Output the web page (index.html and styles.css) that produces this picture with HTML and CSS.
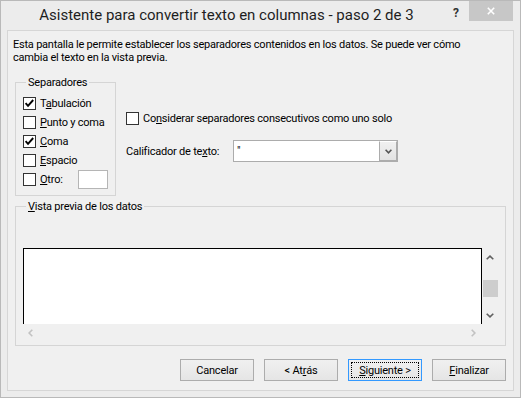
FILE: index.html
```html
<!DOCTYPE html>
<html lang="es">
<head>
<meta charset="utf-8">
<title>Asistente para convertir texto en columnas - paso 2 de 3</title>
<link rel="stylesheet" href="styles.css">
</head>
<body>
<div class="window">
  <div class="titlebar">
    <div class="title">Asistente para convertir texto en columnas - paso 2 de 3</div>
    <div class="help">?</div>
    <div class="close">
      <svg width="8" height="8" viewBox="0 0 8 8"><path d="M0.8 0.8 L7.2 7.2 M7.2 0.8 L0.8 7.2" stroke="#fff" stroke-width="1.6" fill="none"/></svg>
    </div>
  </div>
  <div class="client">
    <p class="intro">Esta pantalla le permite establecer los separadores contenidos en los datos. Se puede ver cómo<br>cambia el texto en la vista previa.</p>

    <div class="top-row">
      <div class="group sep">
        <div class="legend">Separadores</div>
        <div class="check-row">
          <span class="cb"><svg width="13" height="13" viewBox="0 0 13 13"><path d="M2.6 6.2 L5 8.8 L10.2 3" stroke="#000" stroke-width="1.9" fill="none"/></svg></span>
          <span>T<u>a</u>bulación</span>
        </div>
        <div class="check-row">
          <span class="cb"></span>
          <span><u>P</u>unto y coma</span>
        </div>
        <div class="check-row">
          <span class="cb"><svg width="13" height="13" viewBox="0 0 13 13"><path d="M2.6 6.2 L5 8.8 L10.2 3" stroke="#000" stroke-width="1.9" fill="none"/></svg></span>
          <span><u>C</u>oma</span>
        </div>
        <div class="check-row">
          <span class="cb"></span>
          <span><u>E</u>spacio</span>
        </div>
        <div class="check-row">
          <span class="cb"></span>
          <span><u>O</u>tro:</span>
          <span class="other-input"></span>
        </div>
      </div>

      <div class="options">
        <div class="check-row">
          <span class="cb"></span>
          <span>Co<u>n</u>siderar separadores consecutivos como uno solo</span>
        </div>
        <div class="qual-row">
          <span class="qual-label">Calificador de te<u>x</u>to:</span>
          <div class="combo">
            <span class="combo-value">"</span>
            <span class="combo-btn"><svg width="7" height="5" viewBox="0 0 7 5"><path d="M0.6 0.8 L3.5 3.8 L6.4 0.8" stroke="#555" stroke-width="1.6" fill="none"/></svg></span>
          </div>
        </div>
      </div>
    </div>

    <div class="group preview">
      <div class="legend"><u>V</u>ista previa de los datos</div>
      <div class="pv">
        <div class="pv-area"></div>
        <div class="vscroll">
          <svg class="arrow-up" width="8" height="5" viewBox="0 0 8 5"><path d="M0.7 4.3 L4 1.1 L7.3 4.3" stroke="#606060" stroke-width="1.6" fill="none"/></svg>
          <span class="thumb"></span>
          <svg class="arrow-down" width="8" height="5" viewBox="0 0 8 5"><path d="M0.7 0.7 L4 3.9 L7.3 0.7" stroke="#606060" stroke-width="1.6" fill="none"/></svg>
        </div>
        <div class="hscroll">
          <svg width="5" height="8" viewBox="0 0 5 8"><path d="M4.3 0.7 L1.1 4 L4.3 7.3" stroke="#c2c2c2" stroke-width="1.6" fill="none"/></svg>
          <svg width="5" height="8" viewBox="0 0 5 8"><path d="M0.7 0.7 L3.9 4 L0.7 7.3" stroke="#c2c2c2" stroke-width="1.6" fill="none"/></svg>
        </div>
      </div>
    </div>

    <div class="buttons">
      <button class="btn">Cancelar</button>
      <button class="btn">&lt; At<u>r</u>ás</button>
      <button class="btn default"><span class="focus"><u>S</u>iguiente &gt;</span></button>
      <button class="btn"><u>F</u>inalizar</button>
    </div>
  </div>
</div>
</body>
</html>
```
FILE: styles.css
```css
* { box-sizing: border-box; }
html, body { margin: 0; padding: 0; }
body {
  width: 521px;
  height: 398px;
  font-family: Roboto, "Liberation Sans", Arial, sans-serif;
  font-size: 11px;
  letter-spacing: -0.22px;
  color: #000;
  background: #fff;
}
u { text-decoration: underline; text-underline-offset: 1px; }

.window {
  width: 521px;
  height: 398px;
  background: #ececec;
  border: 1px solid #b9b9b9;
  padding: 0 6px 6px 6px;
  display: flex;
  flex-direction: column;
}

.titlebar {
  height: 29px;
  display: flex;
  align-items: flex-start;
}
.title {
  flex: 1;
  text-align: center;
  font-size: 15px;
  letter-spacing: 0;
  line-height: 29px;
  color: #1e1e1e;
  padding-left: 3px;
}
.help {
  width: 26px;
  text-align: center;
  font-weight: bold;
  font-size: 12px;
  letter-spacing: 0;
  line-height: 25px;
  color: #333;
}
.close {
  width: 44px;
  height: 20px;
  background: #c7c7c7;
  display: flex;
  align-items: center;
  justify-content: center;
  margin-right: 1px;
}

.client {
  flex: 1;
  background: #f0f0f0;
  border: 1px solid #d6d6d6;
  display: flex;
  flex-direction: column;
}

.intro {
  margin: 7px 0 0 5px;
  line-height: 13px;
  white-space: nowrap;
}

.top-row {
  display: flex;
  align-items: flex-start;
  margin-top: 18px;
}

.group {
  border: 1px solid #d5d5d5;
}
.legend {
  width: max-content;
  margin: -7px 0 0 3px;
  padding: 0 2px;
  background: #f0f0f0;
  line-height: 13px;
}

.sep {
  width: 101px;
  margin-left: 7px;
  padding: 5px 7px 6px 7px;
}
.sep .legend { margin-bottom: 5px; margin-top: -12px; }

.check-row {
  display: flex;
  align-items: center;
  height: 19px;
  gap: 4px;
  white-space: nowrap;
}
.cb {
  width: 13px;
  height: 13px;
  flex: none;
  border: 1px solid #333;
  background: #fff;
}
.cb svg { display: block; margin: -1px 0 0 -1px; }

.other-input {
  margin-left: auto;
  width: 30px;
  height: 19px;
  background: #fff;
  border: 1px solid #b5b5b5;
}

.options {
  margin: 27px 0 0 10px;
}
.qual-row {
  display: flex;
  align-items: center;
  margin-top: 12px;
}
.qual-label { width: 107px; white-space: nowrap; }
.combo {
  width: 165px;
  height: 22px;
  background: #fff;
  border: 1px solid #acacac;
  display: flex;
}
.combo-value {
  flex: 1;
  padding-left: 3px;
  line-height: 19px;
}
.combo-btn {
  width: 18px;
  border-left: 1px solid #acacac;
  border-top: 1px solid #fff;
  border-right: 1px solid #acacac;
  border-bottom: 1px solid #acacac;
  background: linear-gradient(#f0f0f0, #e3e3e3);
  display: flex;
  align-items: center;
  justify-content: center;
}

.preview {
  margin: 10px 7px 0 7px;
  padding: 0 0 4px 7px;
}
.preview .legend { margin-bottom: 35px; }

.pv {
  display: grid;
  grid-template-columns: 459px 16px;
  grid-template-rows: 76px 17px;
}
.pv-area {
  background: #fff;
  border: 1px solid #000;
  border-bottom: none;
}
.vscroll {
  display: flex;
  flex-direction: column;
  align-items: center;
  padding-top: 7px;
}
.arrow-up, .arrow-down { display: block; }
.thumb {
  width: 15px;
  height: 17px;
  background: #cdcdcd;
  margin-top: 20px;
}
.arrow-down { margin-top: 16px; }
.hscroll {
  display: flex;
  justify-content: space-between;
  align-items: center;
  padding: 0 6px 0 5px;
}

.buttons {
  display: flex;
  justify-content: flex-end;
  gap: 10px;
  margin-top: 13px;
  padding-right: 7px;
}
.btn {
  width: 74px;
  height: 22px;
  font: inherit;
  letter-spacing: inherit;
  color: #000;
  background: linear-gradient(#f0f0f0, #e5e5e5);
  border: 1px solid #acacac;
  border-radius: 0;
  padding: 0;
  display: flex;
  align-items: center;
  justify-content: center;
}
.btn.default {
  border-color: #3399ff;
  padding: 2px;
}
.focus {
  width: 100%;
  height: 100%;
  border: 1px dotted #000;
  display: flex;
  align-items: center;
  justify-content: center;
}
```
